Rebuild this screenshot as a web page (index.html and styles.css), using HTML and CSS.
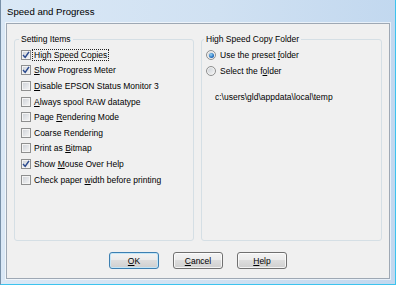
FILE: index.html
```html
<html>
<head>
  <title>Speed and Progress</title>
  <meta charset="UTF-8">
  <link rel="stylesheet" href="styles.css">
</head>
<body>
  <div class="window">
    <div class="titlebar">Speed and Progress</div>
    <div class="client">
      <div class="groups">
        <fieldset class="group group-left">
          <legend>Setting Items</legend>
          <div class="row"><span class="check"><svg width="8" height="8" viewBox="0 0 8 8"><path d="M1 4 L3.2 6.4 L7 0.8" fill="none" stroke="#2b4a8e" stroke-width="1.5"/></svg></span><span class="focus">High Speed Copies</span></div>
          <div class="row"><span class="check"><svg width="8" height="8" viewBox="0 0 8 8"><path d="M1 4 L3.2 6.4 L7 0.8" fill="none" stroke="#2b4a8e" stroke-width="1.5"/></svg></span><span><u>S</u>how Progress Meter</span></div>
          <div class="row"><span class="check"></span><span><u>D</u>isable EPSON Status Monitor 3</span></div>
          <div class="row"><span class="check"></span><span><u>A</u>lways spool RAW datatype</span></div>
          <div class="row"><span class="check"></span><span>Page <u>R</u>endering Mode</span></div>
          <div class="row"><span class="check"></span><span>Coarse Rendering</span></div>
          <div class="row"><span class="check"></span><span>Print as <u>B</u>itmap</span></div>
          <div class="row"><span class="check"><svg width="8" height="8" viewBox="0 0 8 8"><path d="M1 4 L3.2 6.4 L7 0.8" fill="none" stroke="#2b4a8e" stroke-width="1.5"/></svg></span><span>Show <u>M</u>ouse Over Help</span></div>
          <div class="row"><span class="check"></span><span>Check paper <u>w</u>idth before printing</span></div>
        </fieldset>
        <fieldset class="group group-right">
          <legend>High Speed Copy Folder</legend>
          <div class="row radio-row"><span class="radio on"><span class="dot"></span></span><span>Use the preset <u>f</u>older</span></div>
          <div class="row radio-row"><span class="radio"></span><span>Select the f<u>o</u>lder</span></div>
          <div class="path">c:\users\gld\appdata\local\temp</div>
        </fieldset>
      </div>
      <div class="buttons">
        <button class="btn btn-default"><u>O</u>K</button>
        <button class="btn"><u>C</u>ancel</button>
        <button class="btn"><u>H</u>elp</button>
      </div>
    </div>
  </div>
</body>
</html>
```

FILE: styles.css
```css
body {
  margin: 0;
  font-family: "Liberation Sans", Arial, sans-serif;
  font-size: 8.5px;
  color: #000;
}
.window {
  width: 396px;
  height: 285px;
  box-sizing: border-box;
  border-left: 1px solid #7890a8;
  border-right: 1px solid #3cc3ee;
  border-bottom: 1px solid #3cc3ee;
  padding: 0 5px 5px;
  background: linear-gradient(to right, #dae8f6 0%, #d0e1f2 55%, #c2d8ef 100%);
}
.titlebar {
  height: 23px;
  line-height: 23px;
  padding-left: 1px;
  font-size: 9.6px;
  color: #000;
}
.client {
  height: 256px;
  box-sizing: border-box;
  border: 1px solid #9ea8b4;
  box-shadow: 0 0 0 1px rgba(255, 255, 255, 0.6);
  background: #f0f0f0;
  padding: 10px 7px 0;
}
.groups {
  display: flex;
  gap: 7px;
}
.group {
  margin: 0;
  height: 207px;
  box-sizing: border-box;
  border: 1px solid #d5dfe5;
  border-radius: 3px;
  padding: 3px 0 0 6px;
  min-width: 0;
}
.group-left {
  width: 180px;
}
.group-right {
  width: 181px;
  padding-left: 4px;
}
.group legend {
  padding: 0 2px;
  margin-left: -2px;
  line-height: 10px;
}
.row {
  display: flex;
  align-items: center;
  height: 15.6px;
  line-height: 10px;
  white-space: nowrap;
}
.radio-row {
  height: 16px;
}
.check {
  width: 10px;
  height: 10px;
  box-sizing: border-box;
  margin-right: 3px;
  border: 1px solid #8e8f8f;
  background: linear-gradient(135deg, #ccd0d6, #f6f6f6);
  box-shadow: inset 0 0 0 1px #f4f4f4;
  display: flex;
  align-items: center;
  justify-content: center;
  flex: none;
}
.check svg {
  display: block;
}
.focus {
  outline: 1px dotted #222;
  padding: 0 1px;
  margin-left: -1px;
}
.radio {
  width: 10px;
  height: 10px;
  box-sizing: border-box;
  margin-right: 4px;
  border: 1px solid #8e8f8f;
  border-radius: 50%;
  background: linear-gradient(135deg, #c9ced4, #f7f7f7);
  box-shadow: inset 0 0 0 1px #f2f2f2;
  display: flex;
  align-items: center;
  justify-content: center;
  flex: none;
}
.radio .dot {
  width: 5px;
  height: 5px;
  border-radius: 50%;
  background: radial-gradient(circle at 40% 35%, #9ad6f7 0%, #2c78c4 55%, #10408a 100%);
}
.path {
  margin: 13px 0 0 9px;
  line-height: 10px;
}
.buttons {
  display: flex;
  justify-content: center;
  gap: 14px;
  margin-top: 11px;
}
.btn {
  width: 50px;
  height: 17px;
  padding: 0;
  border: 1px solid #707070;
  border-radius: 3px;
  font-family: "Liberation Sans", Arial, sans-serif;
  font-size: 8.5px;
  color: #000;
  background: linear-gradient(#f3f3f3 0%, #ebebeb 50%, #dddddd 50%, #cfcfcf 100%);
  box-shadow: inset 0 0 0 1px rgba(255, 255, 255, 0.75);
}
.btn-default {
  border-color: #3c7fb1;
  box-shadow: inset 0 0 0 1px #c4e6f7;
}
```
